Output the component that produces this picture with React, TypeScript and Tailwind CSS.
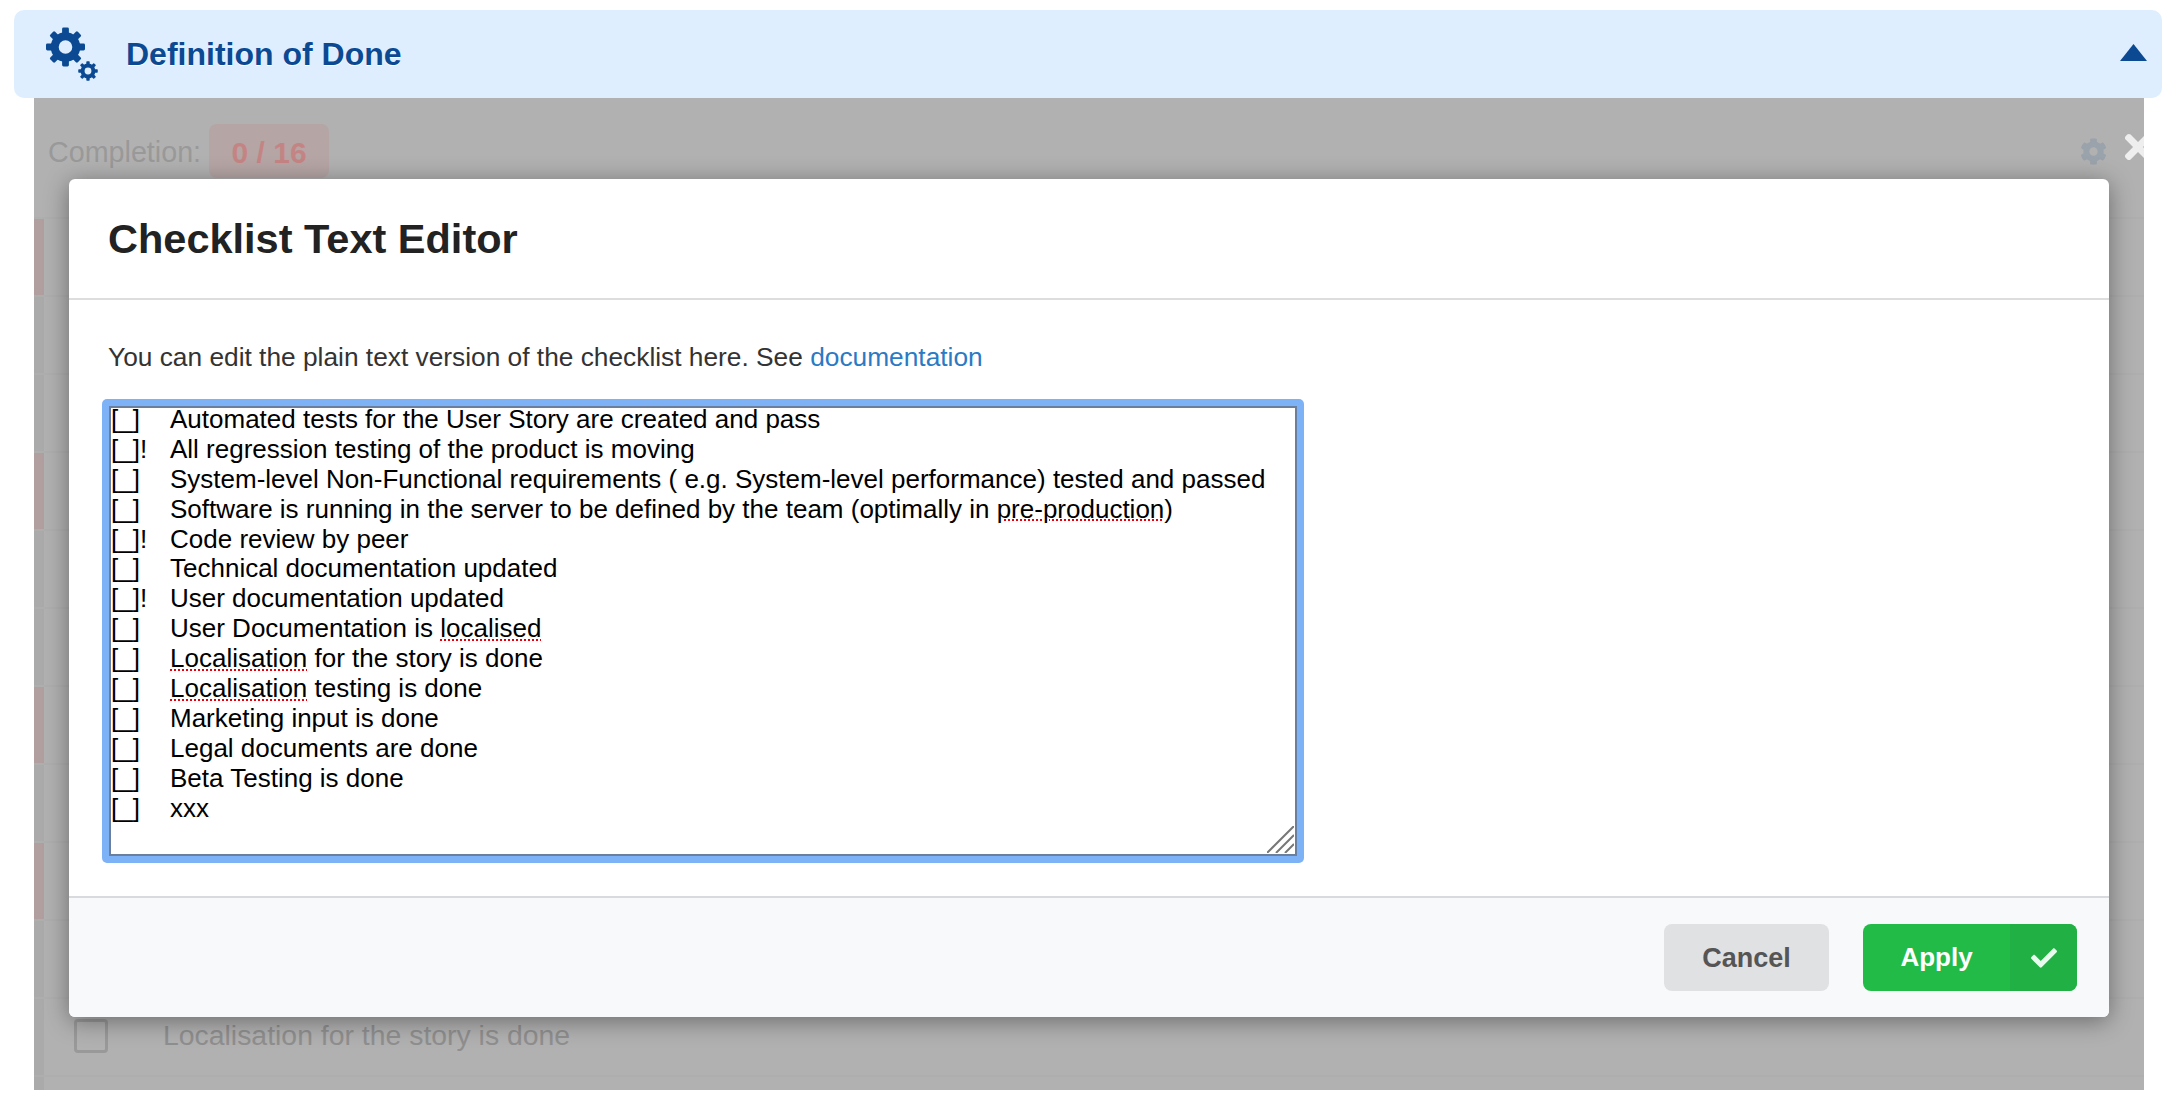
import { FaCog, FaCheck, FaTimes } from "react-icons/fa"

const font = "font-['Liberation_Sans',Arial,sans-serif]"

const lines: { mark: string; parts: { text: string; typo?: boolean }[] }[] = [
  { mark: "[_]", parts: [{ text: "Automated tests for the User Story are created and pass" }] },
  { mark: "[_]!", parts: [{ text: "All regression testing of the product is moving" }] },
  { mark: "[_]", parts: [{ text: "System-level Non-Functional requirements ( e.g. System-level performance) tested and passed" }] },
  {
    mark: "[_]",
    parts: [
      { text: "Software is running in the server to be defined by the team (optimally in " },
      { text: "pre-production", typo: true },
      { text: ")" },
    ],
  },
  { mark: "[_]!", parts: [{ text: "Code review by peer" }] },
  { mark: "[_]", parts: [{ text: "Technical documentation updated" }] },
  { mark: "[_]!", parts: [{ text: "User documentation updated" }] },
  { mark: "[_]", parts: [{ text: "User Documentation is " }, { text: "localised", typo: true }] },
  { mark: "[_]", parts: [{ text: "Localisation", typo: true }, { text: " for the story is done" }] },
  { mark: "[_]", parts: [{ text: "Localisation", typo: true }, { text: " testing is done" }] },
  { mark: "[_]", parts: [{ text: "Marketing input is done" }] },
  { mark: "[_]", parts: [{ text: "Legal documents are done" }] },
  { mark: "[_]", parts: [{ text: "Beta Testing is done" }] },
  { mark: "[_]", parts: [{ text: "xxx" }] },
]

// rows behind the modal, true = has the red priority strip
const rows = [true, false, false, true, false, false, true, false, true, false]

// eight toothed cog used in the section header
function HeaderCog({ className }: { className: string }) {
  const teeth = [0, 45, 90, 135, 180, 225, 270, 315]
  return (
    <svg className={className} viewBox="0 0 40 40" fill="#0b4a93">
      <circle cx="20" cy="20" r="10.8" fill="none" stroke="#0b4a93" strokeWidth="8" />
      {teeth.map((deg) => (
        <rect key={deg} x="16.6" y="0.5" width="6.8" height="8" rx="1.4" transform={`rotate(${deg} 20 20)`} />
      ))}
    </svg>
  )
}

function BackgroundRow({ flagged }: { flagged: boolean }) {
  return (
    <div className="flex h-[78px] border-t-2 border-[#aeaeae]">
      <div className={`w-[10px] ${flagged ? "bg-[#b19e9e]" : "bg-[#aaaaaa]"}`} />
    </div>
  )
}

export default function App() {
  return (
    <div className={`relative h-[1106px] w-full overflow-hidden bg-white ${font}`}>
      <div className="pt-[10px]">
        <div className="ml-[14px] flex h-[88px] items-center rounded-[10px] bg-[#deeeff] pl-[31px] pr-[15px]">
          <div className="relative h-[54px] w-[81px] shrink-0">
            <HeaderCog className="absolute left-[0px] top-[0px] h-[40px] w-[41px]" />
            <HeaderCog className="absolute left-[33px] top-[34px] h-[20px] w-[20px]" />
          </div>
          <span className="flex-1 text-[32px] font-bold leading-none text-[#0b4a93] [text-shadow:0_1px_0_#fff]">
            Definition of Done
          </span>
          <svg className="mb-[3px]" width="27" height="18" viewBox="0 0 27 18">
            <path d="M13.5 0 27 17H0Z" fill="#0b4a93" />
          </svg>
        </div>
      </div>

      <div className="ml-[34px] h-[992px] w-[2110px] overflow-hidden bg-[#b1b1b1]">
        <div className="flex h-[119px] pl-[14px] pt-[26px]">
          <span className="mt-[10px] text-[28.7px] leading-[36px] text-[#999999]">Completion:</span>
          <span className="ml-[8px] flex h-[54px] w-[120px] items-center justify-center rounded-[8px] bg-[#b5a5a5] pt-[2px] text-[30px] font-bold text-[#c58484]">
            0 / 16
          </span>
          <div className="ml-auto flex items-start pt-[14px]">
            <FaCog className="text-[27px] text-[#9aa2ab]" />
            <FaTimes className="ml-[12px] mr-[-13px] mt-[-10px] text-[38px] text-[#eeeeee]" />
          </div>
        </div>
        {rows.map((flagged, i) => (
          <BackgroundRow key={i} flagged={flagged} />
        ))}
        <div className="flex h-[78px] items-center border-t-2 border-[#aeaeae]">
          <div className="h-full w-[10px] bg-[#aaaaaa]" />
          <div className="ml-[30px] mt-[-3px] h-[34px] w-[34px] rounded-[4px] border-[3px] border-[#999999]" />
          <span className="ml-[55px] mt-[-3px] text-[28.4px] text-[#8f8f8f]">Localisation for the story is done</span>
        </div>
        <div className="flex h-[15px] border-t-2 border-[#aeaeae]">
          <div className="w-[10px] bg-[#aaaaaa]" />
        </div>
      </div>

      <div className="absolute left-[69px] top-[179px] flex h-[838px] w-[2040px] flex-col rounded-[6px] bg-white shadow-[0_4px_24px_rgba(0,0,0,0.4)]">
        <div className="flex h-[119px] items-center pl-[39px] pt-[2px]">
          <h2 className="text-[41.5px] font-bold text-[#222222]">Checklist Text Editor</h2>
        </div>
        <div className="h-[2px] bg-[#dddddd]" />
        <div className="flex-1 pl-[33px]">
          <p className="pl-[6px] pt-[39px] text-[26.3px] leading-[36px] text-[#333333]">
            You can edit the plain text version of the checklist here. See{" "}
            <span className="text-[#2a7ac4]">documentation</span>
          </p>
          <div className="relative mt-[24px] h-[464px] w-[1202px] rounded-[5px] bg-[#7eb2f6] p-[7px]">
            <div className="h-[450px] border-2 border-[#6b7f9c] bg-white text-[26px] leading-[29.9px] text-black">
              <div className="-mt-[3px]">
                {lines.map((line, i) => (
                  <div key={i} className="flex h-[29.9px]">
                    <span className="w-[59px] shrink-0">{line.mark}</span>
                    <span className="whitespace-pre">
                      {line.parts.map((part, j) => (
                        <span
                          key={j}
                          className={part.typo ? "underline decoration-red-600 decoration-dotted decoration-2 underline-offset-2" : ""}
                        >
                          {part.text}
                        </span>
                      ))}
                    </span>
                  </div>
                ))}
              </div>
            </div>
            <svg className="absolute bottom-[10px] right-[10px]" width="27" height="27" viewBox="0 0 27 27" stroke="#777777" strokeWidth="2">
              <path d="M0 27 27 0M9 27 27 9M18 27 27 18" fill="none" />
            </svg>
          </div>
        </div>
        <div className="flex h-[121px] items-start justify-end rounded-b-[6px] border-t-2 border-[#d9dadd] bg-[#f8f9fb] pr-[32px] pt-[26px]">
          <button className="h-[67px] w-[165px] rounded-[8px] bg-[#e0e1e3] pt-[2px] text-[27px] font-bold text-[#555555]">Cancel</button>
          <button className="ml-[34px] flex h-[67px] w-[214px] overflow-hidden rounded-[8px] bg-[#22bb47] text-[26px] font-bold text-white">
            <span className="flex h-full w-[147px] items-center justify-center">Apply</span>
            <span className="flex h-full flex-1 items-center justify-center bg-[#21b044]">
              <FaCheck className="text-[26px] text-[#eafaef]" />
            </span>
          </button>
        </div>
      </div>
    </div>
  )
}
